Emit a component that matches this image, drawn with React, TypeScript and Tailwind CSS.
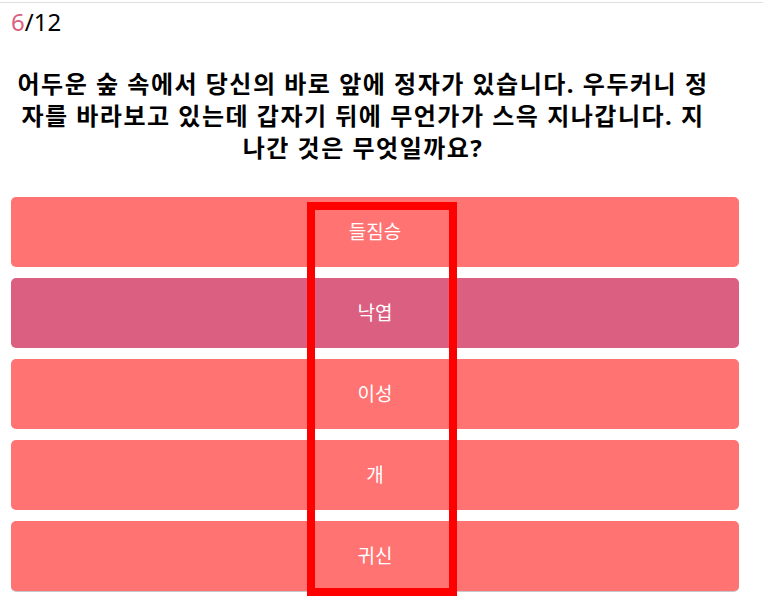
import React, { useState } from 'react';

const choices = ['들짐승', '낙엽', '이성', '개', '귀신'];

const App: React.FC = () => {
  const [selected, setSelected] = useState<number>(1);

  return (
    <div
      className="relative min-h-[606px] bg-white text-black"
      style={{ fontFamily: '"Noto Sans", "Noto Sans CJK KR", sans-serif' }}
    >
      <div className="h-[2px]" />
      <div className="border-t border-[#dedede]" />
      <div className="pl-[11px] pr-[24px] pt-[3px]">
        <div className="text-[24px] leading-[32px]">
          <span className="text-[#db5f80]">6</span>/12
        </div>
        <h2 className="mt-[30px] pr-[24px] text-center text-[24px] font-bold leading-[32px] tracking-[1.5px] break-all">
          어두운 숲 속에서 당신의 바로 앞에 정자가 있습니다. 우두커니 정자를 바라보고 있는데 갑자기 뒤에 무언가가 스윽 지나갑니다. 지나간 것은 무엇일까요?
        </h2>
        <ul className="mt-[33px] flex flex-col gap-[11px]">
          {choices.map((choice, i) => (
            <li key={choice}>
              <button
                onClick={() => setSelected(i)}
                className={
                  'h-[70px] w-full rounded-[5px] text-[19px] text-white ' +
                  (i === selected ? 'bg-[#db5f80]' : 'bg-[#ff7373]') +
                  (i === choices.length - 1 ? ' shadow-[0_1px_0_#c8c8c8]' : '')
                }
              >
                {choice}
              </button>
            </li>
          ))}
        </ul>
      </div>
      {/* 주석 표시 박스 */}
      <div className="pointer-events-none absolute left-[307px] top-[202px] h-[394px] w-[150px] border-[8px] border-[#ff0000]" />
    </div>
  );
};

export default App;
